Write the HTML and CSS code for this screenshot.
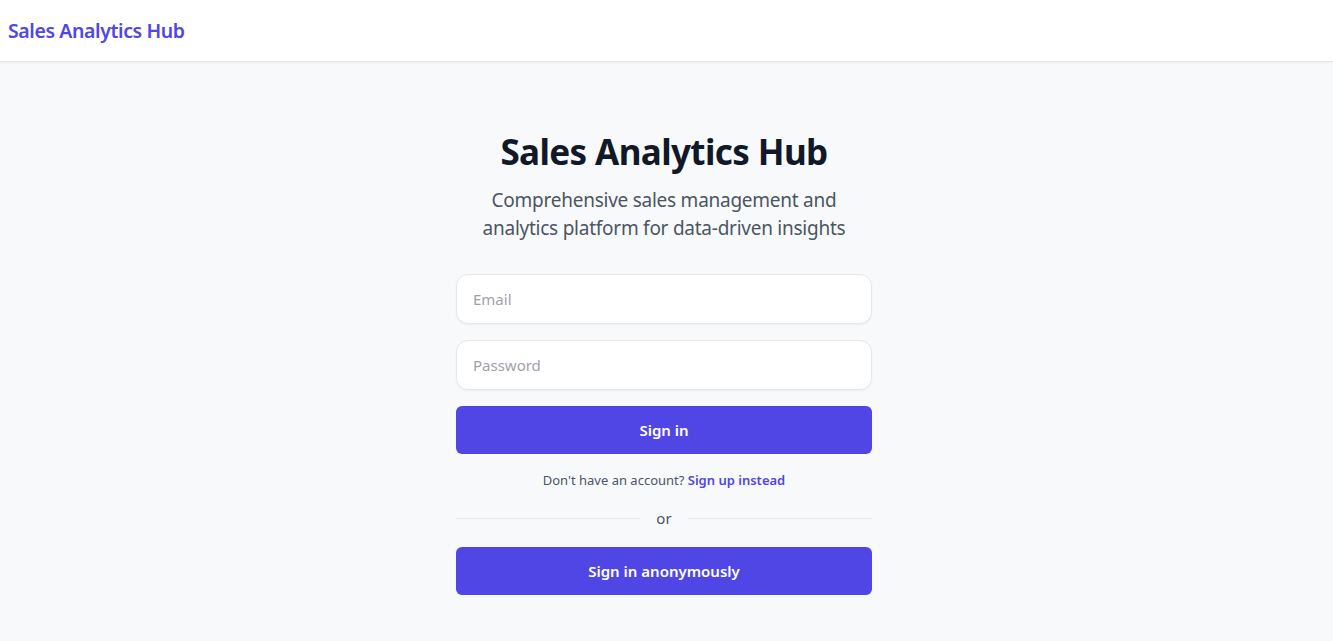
FILE: index.html
```html
<!DOCTYPE html>
<html lang="en">
<head>
<meta charset="utf-8">
<title>Sales Analytics Hub</title>
<link rel="stylesheet" href="styles.css">
</head>
<body>
<header class="topbar">
  <h2 class="brand">Sales Analytics Hub</h2>
</header>
<main class="main">
  <div class="panel">
    <h1 class="title">Sales Analytics Hub</h1>
    <p class="subtitle">Comprehensive sales management and analytics platform for data-driven insights</p>
    <form class="form">
      <input class="field" type="email" placeholder="Email">
      <input class="field" type="password" placeholder="Password">
      <button class="btn" type="button">Sign in</button>
      <p class="switch">Don't have an account? <a class="link" href="#">Sign up instead</a></p>
    </form>
    <div class="divider"><span class="rule"></span><span class="or">or</span><span class="rule"></span></div>
    <button class="btn" type="button">Sign in anonymously</button>
  </div>
</main>
</body>
</html>
```
FILE: styles.css
```css
* { box-sizing: border-box; }
html, body { margin: 0; padding: 0; }
body {
  font-family: "Noto Sans", "Open Sans", sans-serif;
  background: #f8f9fb;
  color: #0f172a;
  min-height: 100vh;
}
.topbar {
  height: 62px;
  background: #ffffff;
  border-bottom: 1px solid #e5e7eb;
  box-shadow: 0 1px 2px rgba(0,0,0,0.05);
  display: flex;
  align-items: center;
  padding: 0 8px;
}
.brand {
  margin: 0;
  font-size: 19.5px;
  letter-spacing: -0.4px;
  font-weight: 600;
  color: #4f46e5;
}
.main {
  display: flex;
  justify-content: center;
  padding: 70px 5px 0 0;
}
.panel {
  width: 416px;
  display: flex;
  flex-direction: column;
}
.title {
  margin: 0 0 14px;
  font-size: 35px;
  line-height: 40px;
  letter-spacing: -0.6px;
  font-weight: 700;
  text-align: center;
  color: #111827;
}
.subtitle {
  margin: 0 0 32px;
  font-size: 19px;
  line-height: 28px;
  letter-spacing: -0.25px;
  text-align: center;
  color: #4b5563;
}
.form {
  display: flex;
  flex-direction: column;
  gap: 16px;
}
.field {
  height: 50px;
  width: 100%;
  border: 1px solid #e5e7eb;
  border-radius: 12px;
  background: #ffffff;
  box-shadow: 0 1px 2px rgba(0,0,0,0.05);
  padding: 0 16px;
  font-family: inherit;
  font-size: 15px;
  color: #111827;
  outline: none;
}
.field::placeholder { color: #a1a1aa; }
.btn {
  height: 48px;
  width: 100%;
  border: none;
  border-radius: 6px;
  background: #4f46e5;
  color: #ffffff;
  font-family: inherit;
  font-size: 15px;
  font-weight: 600;
  cursor: pointer;
}
.switch {
  margin: 0;
  text-align: center;
  font-size: 13px;
  line-height: 20px;
  color: #4b5563;
}
.link {
  color: #4f46e5;
  font-weight: 600;
  text-decoration: none;
}
.divider {
  display: flex;
  align-items: center;
  margin: 16px 0 17px;
}
.rule {
  flex: 1;
  height: 1px;
  background: #e5e7eb;
}
.or {
  margin: 0 16px;
  font-size: 15px;
  line-height: 24px;
  color: #4b5563;
}
```
